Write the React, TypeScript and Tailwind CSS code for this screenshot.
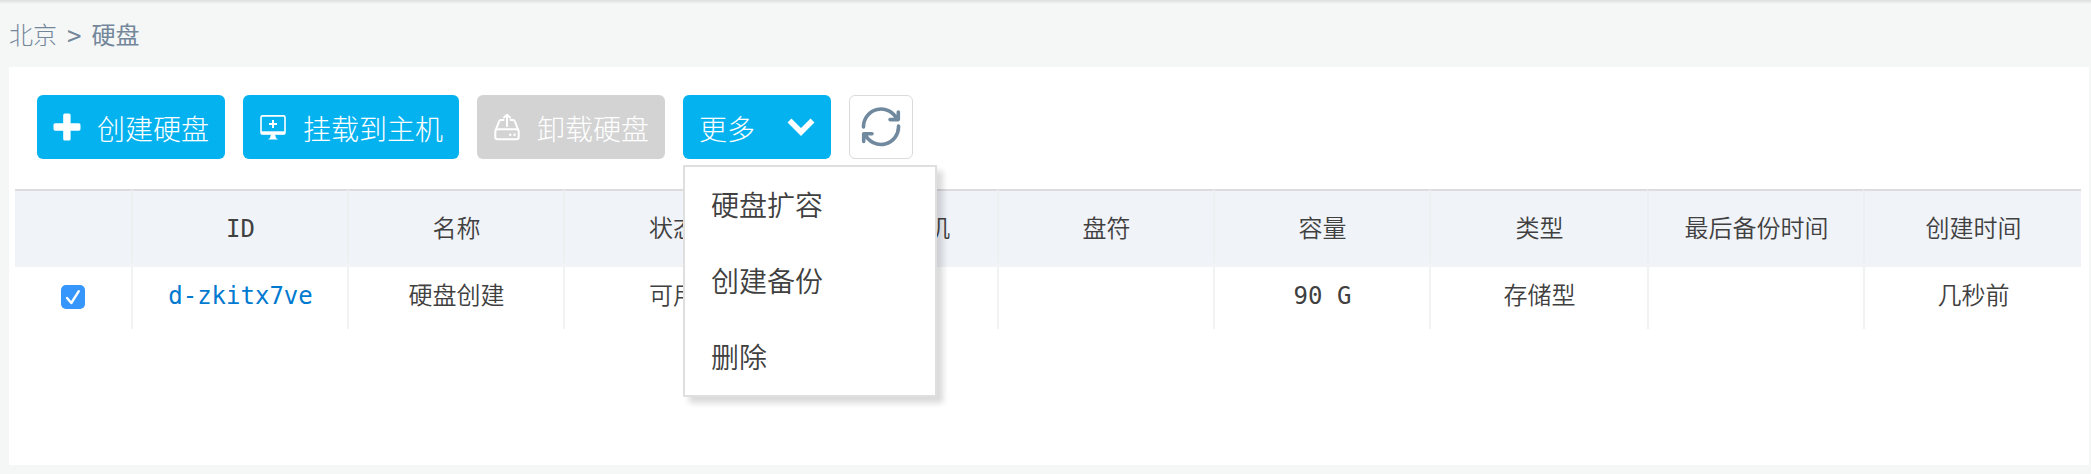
import { ReactNode } from "react";

const columns = ["", "ID", "名称", "状态", "挂载到主机", "盘符", "容量", "类型", "最后备份时间", "创建时间"];
const row = ["d-zkitx7ve", "硬盘创建", "可用", "", "", "90 G", "存储型", "", "几秒前"];
const menu = ["硬盘扩容", "创建备份", "删除"];
const grid = "grid grid-cols-[116px_216px_216px_217px_217px_216px_216px_218px_216px_218px]";

function PlusIcon() {
  return (
    <svg width="28" height="28" viewBox="0 0 28 28" className="shrink-0 fill-current">
      <rect x="10.2" y="0.5" width="7.4" height="27" rx="1.6" />
      <rect x="0.5" y="10.3" width="27" height="7.4" rx="1.6" />
    </svg>
  );
}

function MonitorIcon() {
  return (
    <svg width="28" height="28" viewBox="0 0 28 28" className="shrink-0" fill="none" stroke="currentColor">
      <rect x="2" y="2.9" width="24" height="18" rx="1.5" strokeWidth="1.6" />
      <path d="M2 19.8H26" strokeWidth="3" />
      <path d="M14 7V15M10 11H18" strokeWidth="2" />
      <path d="M12 21.5H16L17 25L19 26.6H9L11 25Z" fill="currentColor" stroke="none" />
    </svg>
  );
}

function DriveIcon() {
  return (
    <svg width="28" height="28" viewBox="0 0 28 28" className="shrink-0" fill="none" stroke="currentColor" strokeWidth="2" strokeLinecap="round" strokeLinejoin="round">
      <path d="M10.500 7H8Q6.600 7 6.100 8.400L2.800 17M17.500 7H20Q21.400 7 21.900 8.400L25.200 17" />
      <rect x="2.300" y="16.300" width="23.400" height="10" rx="2.200" />
      <path d="M14 13V2.500M11 4.500L14 1.800L17 4.500" />
      <path d="M17.200 21.700h.1M21.500 21.700h.1" strokeWidth="2.400" />
    </svg>
  );
}

function Button({ icon, children, className }: { icon: ReactNode; children: ReactNode; className: string }) {
  return (
    <button className={"flex h-16 items-center gap-4 rounded-md pl-4 font-light text-white " + className}>
      {icon}
      <span className="pt-[3px]">{children}</span>
    </button>
  );
}

export default function App() {
  return (
    <div className="h-[474px] w-full overflow-hidden bg-[#f5f7f7] pr-[2px] pl-[9px] font-['DejaVu_Sans_Mono','Noto_Sans_CJK_SC',sans-serif] text-2xl font-[350] text-[#404040]">
      <div className="-mr-[2px] -ml-[9px] h-1 bg-linear-to-b from-[#dddfdf] to-[#f5f7f7]" />
      <nav className="flex h-[63px] items-center pb-1 text-[#74879a]">
        <span className="font-['Noto_Sans_CJK_SC',sans-serif] font-light">北京</span>
        <span className="mr-[10px] ml-[10px] pt-1">&gt;</span>
        <span className="font-['Noto_Sans_CJK_SC',sans-serif] font-normal">硬盘</span>
      </nav>
      <main className="h-[398px] bg-white px-[6px] pt-7">
        <div className="flex h-[94px] items-start gap-[18px] pl-[22px] font-['Noto_Sans_CJK_SC',sans-serif] text-[28px]">
          <Button icon={<PlusIcon />} className="w-[188px] bg-[#04b2ef]">创建硬盘</Button>
          <Button icon={<MonitorIcon />} className="w-[216px] bg-[#04b2ef]">挂载到主机</Button>
          <Button icon={<DriveIcon />} className="w-[188px] bg-[#d3d3d3]">卸载硬盘</Button>
          <div className="relative">
            <button className="flex h-16 w-[148px] items-center justify-between rounded-md bg-[#04b2ef] px-4 font-light text-white">
              <span className="pt-[3px]">更多</span>
              <svg width="28" height="28" viewBox="0 0 28 28" fill="none" stroke="currentColor" strokeWidth="5.500">
                <path d="M2.500 7.500L14 19L25.500 7.500" />
              </svg>
            </button>
            <ul className="absolute top-[70px] left-0 z-10 w-[254px] border-2 border-[#dfdfdf] bg-white shadow-[6px_6px_6px_rgba(0,0,0,0.15)]">
              {menu.map((m) => (
                <li key={m} className="flex h-[76px] items-center pb-px pl-[26px]">{m}</li>
              ))}
            </ul>
          </div>
          <button className="flex size-16 items-center justify-center rounded-md border border-[#d9dbde] text-[#71899f]">
            <svg width="40" height="40" viewBox="0 0 40 40" fill="none" stroke="currentColor" strokeWidth="3.600" strokeLinecap="round" strokeLinejoin="round">
              <path d="M2.500 20A17.500 17.500 0 0 1 36 12.500M37.300 5V12.600H29" />
              <path d="M37.500 19A17.500 17.500 0 0 1 4 27M2.700 34.500V26.800H11" />
            </svg>
          </button>
        </div>
        <div className="w-[2066px]">
          <div className={grid + " h-[78px] border-b-4 border-[#f1f3f6] bg-[#f0f3f8]"}>
            {columns.map((c, i) => (
              <div key={i} className={"flex items-center justify-center border-t-2 border-t-[#dcdcdc] " + (i ? "border-l-2 border-l-[#edeff0]" : "")}>
                <span className="pt-[3px] pl-px">{c}</span>
              </div>
            ))}
          </div>
          <div className={grid + " h-[62px]"}>
            <div className="flex items-center justify-center pb-[2px]">
              <span className="flex size-6 items-center justify-center rounded-[5px] bg-[#3796fc]">
                <svg width="24" height="24" viewBox="0 0 24 24" fill="none" stroke="white" strokeWidth="2.400" strokeLinecap="round" strokeLinejoin="round">
                  <path d="M6 13L10.300 18L17.800 6.200" />
                </svg>
              </span>
            </div>
            {row.map((c, i) => (
              <div key={i} className={"flex items-center justify-center border-l-2 border-[#f1f2f3] pb-1 pl-px " + (i === 0 ? "text-[#0079d0]" : "")}>
                {c}
              </div>
            ))}
          </div>
        </div>
      </main>
    </div>
  );
}
